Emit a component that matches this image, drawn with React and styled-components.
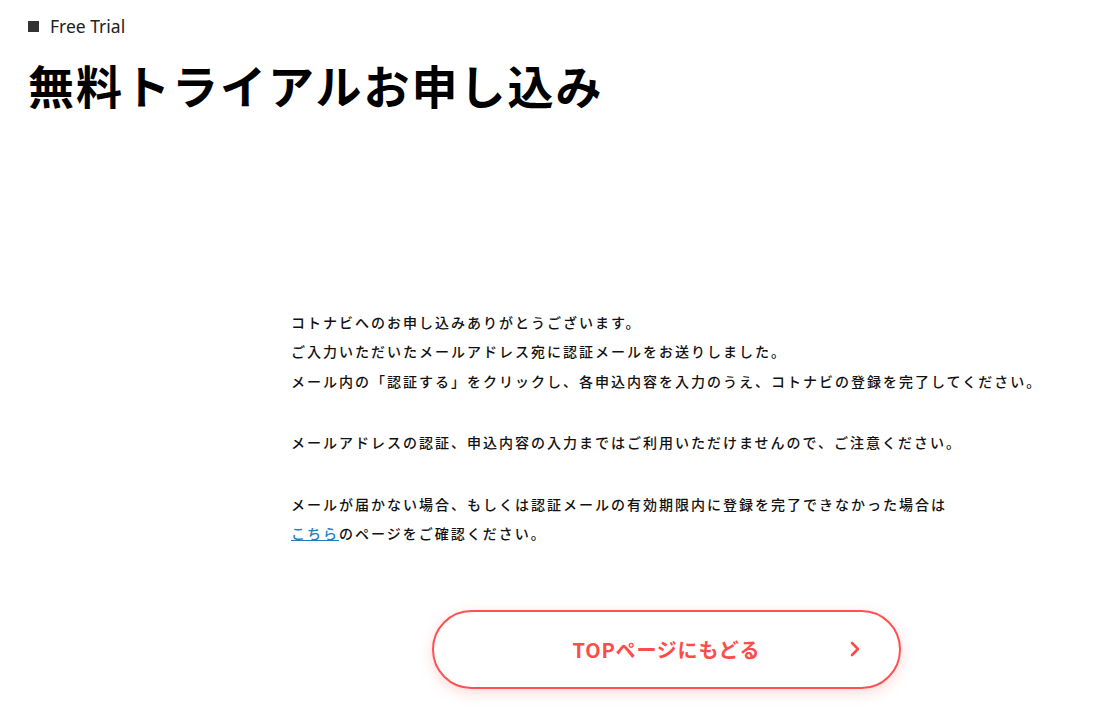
import styled, { createGlobalStyle } from "styled-components";

const GlobalStyle = createGlobalStyle`
  body {
    margin: 0;
    background: #fff;
    color: #111;
    font-family: "Noto Sans CJK JP", "Noto Sans", sans-serif;
  }
`;

const Page = styled.div`
  padding: 14px 28px 36px;
`;

const Eyebrow = styled.div`
  display: flex;
  align-items: center;
  gap: 11px;
  font-family: "Noto Sans", "Noto Sans CJK JP", sans-serif;
  font-size: 17.5px;
  line-height: 24px;
  color: #222;
  &::before {
    content: "";
    width: 11px;
    height: 11px;
    background: #333;
  }
`;

const Title = styled.h1`
  margin: 17px 0 0;
  font-size: 46px;
  font-weight: 700;
  letter-spacing: 2px;
  line-height: 1.3;
  color: #000;
`;

const Content = styled.section`
  width: 751px;
  margin: 193px 0 0 263px;
`;

const Paragraph = styled.p`
  margin: 0 0 32px;
  font-size: 14px;
  font-weight: 500;
  line-height: 29.5px;
  letter-spacing: 2px;
  white-space: nowrap;
  color: #111;
  &:last-of-type {
    margin-bottom: 0;
  }
`;

const TextLink = styled.a`
  color: #1f7fc6;
  text-decoration: underline;
`;

const ButtonRow = styled.div`
  display: flex;
  justify-content: center;
  margin-top: 61px;
`;

const BackButton = styled.a`
  position: relative;
  display: flex;
  align-items: center;
  justify-content: center;
  width: 469px;
  height: 79px;
  box-sizing: border-box;
  border: 2px solid #ff5151;
  border-radius: 40px;
  background: #fff;
  box-shadow: 0 4px 14px rgba(255, 81, 81, 0.22);
  color: #ff4b4b;
  font-size: 20px;
  font-weight: 700;
  letter-spacing: 0.8px;
  text-decoration: none;
`;

const Chevron = styled.svg`
  position: absolute;
  right: 38px;
  top: 50%;
  transform: translateY(-50%);
`;

export default function App() {
  return (
    <Page>
      <GlobalStyle />
      <Eyebrow>Free Trial</Eyebrow>
      <Title>無料トライアルお申し込み</Title>
      <Content>
        <Paragraph>
          コトナビへのお申し込みありがとうございます。
          <br />
          ご入力いただいたメールアドレス宛に認証メールをお送りしました。
          <br />
          メール内の「認証する」をクリックし、各申込内容を入力のうえ、コトナビの登録を完了してください。
        </Paragraph>
        <Paragraph>
          メールアドレスの認証、申込内容の入力まではご利用いただけませんので、ご注意ください。
        </Paragraph>
        <Paragraph>
          メールが届かない場合、もしくは認証メールの有効期限内に登録を完了できなかった場合は
          <br />
          <TextLink href="#">こちら</TextLink>のページをご確認ください。
        </Paragraph>
        <ButtonRow>
          <BackButton href="#">
            TOPページにもどる
            <Chevron width="12" height="16" viewBox="0 0 12 16">
              <path d="M3 2l6 6-6 6" fill="none" stroke="#ff4b4b" strokeWidth="2.6" strokeLinecap="round" strokeLinejoin="round" />
            </Chevron>
          </BackButton>
        </ButtonRow>
      </Content>
    </Page>
  );
}
